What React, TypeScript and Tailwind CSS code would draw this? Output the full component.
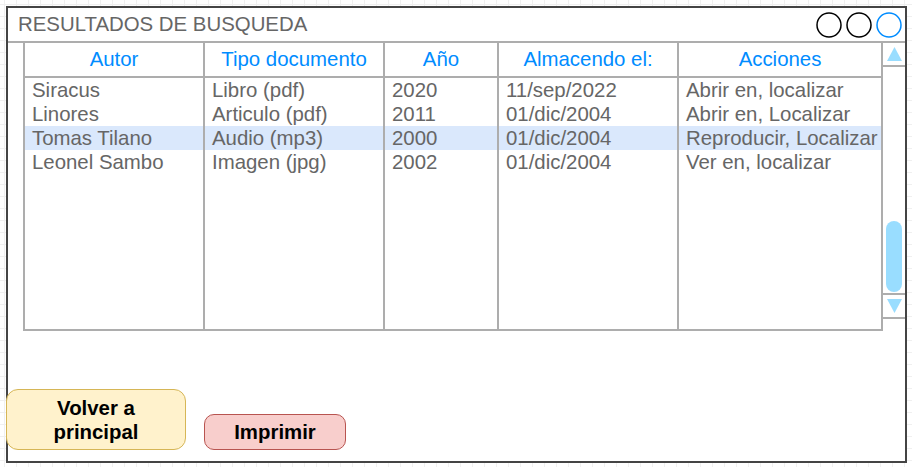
import React from 'react';

type Col = { title: string; width: string };

const columns: Col[] = [
  { title: 'Autor', width: 'w-[180px]' },
  { title: 'Tipo documento', width: 'w-[180px]' },
  { title: 'Año', width: 'w-[114px]' },
  { title: 'Almacendo el:', width: 'w-[180px]' },
  { title: 'Acciones', width: 'w-[204px]' },
];

const rows: string[][] = [
  ['Siracus', 'Libro (pdf)', '2020', '11/sep/2022', 'Abrir en, localizar'],
  ['Linores', 'Articulo (pdf)', '2011', '01/dic/2004', 'Abrir en, Localizar'],
  ['Tomas Tilano', 'Audio (mp3)', '2000', '01/dic/2004', 'Reproducir, Localizar'],
  ['Leonel Sambo', 'Imagen (jpg)', '2002', '01/dic/2004', 'Ver en, localizar'],
];

const selectedRow = 2;

const Circle = ({ color }: { color: string }) => (
  <svg width="26" height="26" viewBox="0 0 26 26">
    <circle cx="13" cy="13" r="12" fill="none" stroke={color} strokeWidth="1.5" />
  </svg>
);

const Scrollbar = () => (
  <div className="flex h-[276px] w-[22px] flex-col border-b-2 border-[#adadad]">
    {/* flecha arriba */}
    <div className="flex h-[24px] items-center justify-center border-b-2 border-[#adadad]">
      <svg width="15" height="14" viewBox="0 0 15 14">
        <polygon points="7.5,0 15,14 0,14" fill="#99ddff" />
      </svg>
    </div>
    {/* pista */}
    <div className="flex flex-1 flex-col justify-end pb-[1px] pl-[3px]">
      <div className="h-[71px] w-[16px] rounded-full bg-[#99ddff]" />
    </div>
    {/* flecha abajo */}
    <div className="flex h-[24px] items-center justify-center border-t-2 border-[#adadad]">
      <svg width="15" height="14" viewBox="0 0 15 14">
        <polygon points="0,0 15,0 7.5,14" fill="#99ddff" />
      </svg>
    </div>
  </div>
);

export default function App() {
  return (
    <div className="h-[467px] w-[912px] bg-white bg-[linear-gradient(to_right,#f0f0f0_1px,transparent_1px),linear-gradient(to_bottom,#f0f0f0_1px,transparent_1px)] bg-[size:12px_12px] bg-[position:4px_4px] pl-[6px] pt-[6px] font-['Liberation_Sans',Arial,sans-serif]">
      <div className="flex h-[457px] w-[901px] flex-col border-2 border-[#444444] bg-white">
        {/* --- Barra de titulo --- */}
        <div className="flex h-[35px] items-center justify-between border-b-2 border-[#adadad] pl-[10px] pr-[3px]">
          <span className="text-[20.4px] leading-none text-[#666666]">RESULTADOS DE BUSQUEDA</span>
          <div className="flex items-center gap-[4px]">
            <Circle color="#000000" />
            <Circle color="#000000" />
            <Circle color="#008cff" />
          </div>
        </div>

        {/* --- Tabla + scroll --- */}
        <div className="ml-[15px] flex items-start">
          <div className="flex h-[288px] border-b-2 border-l-2 border-[#adadad]">
            {columns.map((col, ci) => (
              <div key={col.title} className={`${col.width} flex h-full flex-col border-r-2 border-[#adadad]`}>
                <div className="flex h-[35px] shrink-0 items-center justify-center border-b-2 border-[#adadad] text-[20.4px] text-[#008cff]">
                  {col.title}
                </div>
                {rows.map((row, ri) => (
                  <div
                    key={ri}
                    className={`h-[24px] whitespace-nowrap pl-[7px] text-[20.4px] leading-[24px] text-[#666666] ${
                      ri === selectedRow ? 'bg-[#dae8fc]' : ''
                    }`}
                  >
                    {row[ci]}
                  </div>
                ))}
              </div>
            ))}
          </div>
          <Scrollbar />
        </div>

        {/* --- Botones --- */}
        <div className="-ml-[2px] mt-auto flex items-end gap-[18px] pb-[11px]">
          <button className="flex h-[61px] w-[180px] items-center justify-center rounded-[12px] border border-[#d6b656] bg-[#fff2cc] text-[20.4px] font-bold leading-[24px] text-black">
            Volver a<br />principal
          </button>
          <button className="flex h-[36px] w-[142px] items-center justify-center rounded-[10px] border border-[#b85450] bg-[#f8cecc] text-[20.4px] font-bold text-black">
            Imprimir
          </button>
        </div>
      </div>
    </div>
  );
}
